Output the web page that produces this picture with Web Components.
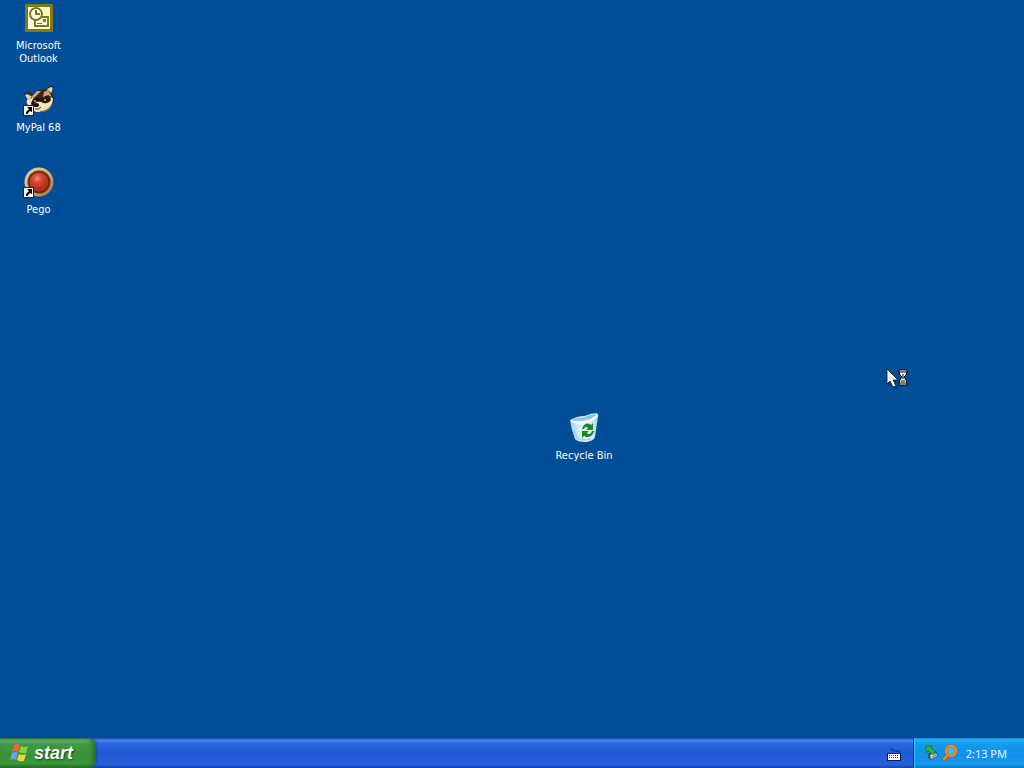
<!DOCTYPE html>
<html lang="en">
<head>
<meta charset="utf-8">
<title>Desktop</title>
<style>
html, body { height: 100%; margin: 0; }
body { display: flex; flex-direction: column; font: 11px/13px "DejaVu Sans Condensed", "Noto Sans", sans-serif; color: #fff; overflow: hidden; }
</style>
</head>
<body>
<xp-desktop>
  <desktop-icon label="Microsoft Outlook">
    <svg width="32" height="32" viewBox="0 0 32 32" aria-hidden="true">
      <rect x="2" y="2" width="28" height="28" fill="#807a10"/>
      <rect x="5" y="5" width="22" height="22" fill="#fffdf0"/>
      <path d="M20 5h7v9h-7z" fill="#f9f4c0"/>
      <rect x="12" y="15" width="13" height="9" fill="#fffdf0" stroke="#807a10" stroke-width="2"/>
      <path d="M20 17h3v3h-3zM14 21h5v1h-5z" fill="#807a10"/>
      <circle cx="13" cy="12" r="6" fill="#fffdf0" stroke="#807a10" stroke-width="2"/>
      <path d="M13 8v4h4" fill="none" stroke="#807a10" stroke-width="2"/>
    </svg>
  </desktop-icon>
  <desktop-icon label="MyPal 68" shortcut>
    <svg width="32" height="32" viewBox="0 0 32 32" aria-hidden="true">
      <path d="M1 11C1 8 7 8 10 10l5-4 8-1 4-3c3-1 4 2 2 6l2 7c-1 7-6 12-13 13C10 29 6 25 6 18z" fill="#3b2419"/>
      <path d="M2 11c2-2 5 0 7 2l-4 3z" fill="#e8d5af"/>
      <path d="M24 5l4-2c2 0 2 3 0 6z" fill="#e3d5b4"/>
      <path d="M9 12l5-5 4 0-5 5-4 4zM21 8l4-2 4 7-4-2-5 2z" fill="#c4aa80"/>
      <path d="M4 16l5-2 5 2-5 2-1 5c-3-1-5-4-4-7z" fill="#f2e4c4"/>
      <path d="M8 20c1-5 5-8 9-6l2 4c-4-1-7 1-8 5z" fill="#25130d"/>
      <path d="M10 23c0-4 4-6 8-5 5-5 8-5 12-4 0 5-2 8-4 10-4 4-12 5-15 3z" fill="#f2e2c0"/>
      <path d="M17 17c3-5 9-6 11-2-1 4-5 5-8 4z" fill="#2a160f"/>
      <path d="M17 27c6 0 9-3 12-7-1 6-6 8-12 8z" fill="#9a6b40"/>
      <ellipse cx="13" cy="21" rx="3" ry="2" fill="#20120c"/>
      <path d="M12 25q4 1 6-2" fill="none" stroke="#55331d"/>
      <circle cx="22" cy="16" r="1" fill="#e6be73"/><circle cx="12" cy="17" r="1" fill="#d9a75c"/>
    </svg>
  </desktop-icon>
  <desktop-icon label="Pego" shortcut>
    <svg width="32" height="32" viewBox="0 0 32 32" aria-hidden="true">
      <defs>
        <radialGradient id="red" cx=".42" cy=".32"><stop stop-color="#f09070"/><stop offset=".4" stop-color="#d84c34"/><stop offset="1" stop-color="#b53220"/></radialGradient>
        <linearGradient id="gold" x2="1" y2="1"><stop stop-color="#e6d5a0"/><stop offset=".55" stop-color="#cfab70"/><stop offset="1" stop-color="#a07438"/></linearGradient>
      </defs>
      <circle cx="16" cy="16" r="13" fill="#6b3a1c" stroke="url(#gold)" stroke-width="3"/>
      <circle cx="16" cy="16" r="10" fill="url(#red)" stroke="#711d0e"/>
    </svg>
  </desktop-icon>
  <desktop-icon label="Recycle Bin" slot="free">
    <svg width="32" height="32" viewBox="0 0 32 32" aria-hidden="true">
      <defs><linearGradient id="bin"><stop stop-color="#a5d2ef"/><stop offset=".35" stop-color="#dceffa"/><stop offset=".65" stop-color="#f4fafd"/><stop offset="1" stop-color="#a0cdea"/></linearGradient></defs>
      <path d="M2 8Q9 4 17 4Q23 1 29 1Q31 2 30 5L27 25Q26 29 18 30Q9 30 7 27Q3 17 2 8z" fill="url(#bin)"/>
      <path d="M4 8Q11 5 17 5Q22 2 28 2Q27 6 18 8Q11 10 4 8z" fill="#8fc3e6"/>
      <path d="M3 9Q11 12 19 10Q27 7 29 3" fill="none" stroke="#effaff" stroke-width="2"/>
      <path d="M5 17Q8 21 9 26Q15 29 23 27" fill="none" stroke="#a9d3ee" stroke-width="2"/>
      <path d="M14 17c1-5 6-7 9-4l2-2v7h-7l2-2c-2-2-3-1-4 1zM26 19c-1 5-6 8-10 5l-2 2v-7h7l-2 2c2 2 4 1 5-2z" fill="#198b22"/>
    </svg>
  </desktop-icon>
  <busy-pointer slot="free"></busy-pointer>
</xp-desktop>
<xp-taskbar></xp-taskbar>

<script>
const define = (name, markup, setup) => customElements.define(name, class extends HTMLElement {
  constructor() {
    super();
    this.attachShadow({ mode: "open" }).innerHTML = markup;
  }
  connectedCallback() { if (setup) setup(this, this.shadowRoot); }
});

define("desktop-icon", `
<style>
:host { display: block; width: 76px; height: 82px; }
a { display: flex; flex-direction: column; align-items: center; gap: 5px; color: #fff; text-decoration: none; text-align: center; cursor: default; }
.picture { position: relative; width: 32px; height: 32px; }
.arrow { display: none; position: absolute; left: 0; bottom: 0; }
:host([shortcut]) .arrow { display: block; }
.label { width: 64px; }
</style>
<a href="#"><span class="picture"><slot></slot>
<svg class="arrow" width="11" height="11" viewBox="0 0 11 11" aria-hidden="true"><path d="M0 0h11v11H0z" fill="#222"/><path d="M1 1h9v9H1z" fill="#fff"/><path d="M4 2h5v5L7 6 5 8v1H3V7l3-3z" fill="#000"/></svg></span>
<span class="label"></span></a>`, (host, root) => {
  root.querySelector(".label").textContent = host.getAttribute("label");
});

define("busy-pointer", `
<style>:host { display: block; } svg { display: block; }</style>
<svg width="24" height="24" viewBox="0 0 24 24" aria-hidden="true">
<path d="M2 3v16l4-4 3 6 3-1-3-6h4z" fill="#003a78"/>
<path d="M1 1v15l3-3 3 6 3-1-3-6h5z" fill="#fff" stroke="#111" stroke-width=".8"/>
<path d="M13 2h8v2l-1 3-2 2 2 3 1 3v2h-8v-2l1-3 2-3-2-2-1-3z" fill="#fff" stroke="#000"/>
<path d="M13 4h8M13 15h8M16 7h2M17 8v3M15 13h4" stroke="#000"/>
</svg>`);

define("xp-desktop", `
<style>
:host { display: block; position: relative; flex: 1; min-height: 0; background: #004e98; }
.icons { display: flex; flex-direction: column; align-items: flex-start; padding-top: 2px; }
.icons ::slotted(desktop-icon) { width: 77px; }
::slotted([slot=free]) { position: absolute; }
::slotted(desktop-icon[slot=free]) { left: 546px; top: 412px; }
::slotted(busy-pointer) { left: 886px; top: 368px; }
</style>
<main class="icons"><slot></slot></main><slot name="free"></slot>`);

define("start-button", `
<style>
:host { display: block; }
button { display: flex; align-items: center; gap: 4px; height: 100%; margin: 0; padding: 0 23px 0 10px; border: 0; border-radius: 0 8px 8px 0;
 color: #fff; font: italic bold 18px/20px "Liberation Sans", sans-serif; text-shadow: 1px 1px 2px #16451a;
 background: linear-gradient(#3d873d 0, #67b465 8%, #3f9940 22%, #389238 60%, #3b993a 85%, #246e25 100%);
 box-shadow: inset -3px 0 4px #246c2b, 1px 0 2px #1b47a8; }
</style>
<button type="button"><svg width="20" height="20" viewBox="0 0 20 20" aria-hidden="true">
<path d="M4 2q3-2 6 0L8 9Q5 7 2 9z" fill="#f0662f"/><path d="M11 3q3 2 7 0l-2 7q-4 1-7-1z" fill="#8ccd3e"/>
<path d="M2 10q3-2 6 0l-2 7q-3-2-6 0z" fill="#6a9ff5"/><path d="M9 11q3 2 7 0l-2 7q-4 1-7-1z" fill="#fbd63c"/>
</svg><span>start</span></button>`);

define("system-tray", `
<style>
:host { display: flex; align-items: center; box-sizing: border-box; width: 111px; padding: 0 17px 0 10px; border-left: 1px solid #0c3694;
 background: linear-gradient(#1687dc 0, #28b5f4 7%, #139bec 18%, #1290e8 60%, #159cee 88%, #0c70ba 100%); box-shadow: inset 1px 0 1px #35c8ff; }
svg { flex: none; } time { margin-left: auto; white-space: nowrap; font-family: "Noto Sans", sans-serif; color: #e4f5ff; }
</style>
<svg width="16" height="16" viewBox="0 0 16 16" aria-hidden="true">
<path d="M4 9l8-3 2 5-7 4-3-2z" fill="#344f58"/><path d="M6 10l6-2 1 3-6 3z" fill="#d4dfd9"/><path d="M8 12l4-2" stroke="#566c70"/>
<path d="M2 1h6l-1 2 4 3v3H8L4 6 2 8z" fill="#26b84a" stroke="#177842"/></svg>
<svg width="20" height="18" viewBox="0 0 20 18" aria-hidden="true"><path d="M8 11l-4 4" stroke="#b35b19" stroke-width="4" stroke-linecap="round"/><path d="M8 11l-4 4" stroke="#f39432" stroke-width="2" stroke-linecap="round"/>
<circle cx="11" cy="7" r="5" fill="#52b6ef" stroke="#b8601f" stroke-width="3"/><circle cx="11" cy="7" r="5" fill="none" stroke="#f39028" stroke-width="2"/></svg>
<time datetime="14:13">2:13 PM</time>`);

define("xp-taskbar", `
<style>
:host { display: flex; height: 30px; background: linear-gradient(#1e4fb5 0, #4387f3 8%, #2a66df 18%, #2359d6 50%, #2560df 88%, #1a42a3 100%); }
.space { flex: 1; }
.keyboard { align-self: center; margin: 3px 12px 0 0; }
</style>
<start-button></start-button><div class="space"></div>
<svg class="keyboard" width="14" height="14" viewBox="0 0 14 14" aria-hidden="true"><path d="M4 0v2h3v1h5v2" fill="none" stroke="#122e70"/><path d="M0 5h14v8H0z" fill="#101d3b"/><path d="M1 6h12v6H1z" fill="#fff"/><path d="M2 7h1v1H2zM4 7h1v1H4zM6 7h1v1H6zM8 7h1v1H8zM10 7h1v1h-1zM2 9h1v1H2zM4 9h1v1H4zM6 9h1v1H6zM8 9h1v1H8zM10 9h1v1h-1z" fill="#26365a"/></svg>
<system-tray></system-tray>`);
</script>
</body>
</html>
